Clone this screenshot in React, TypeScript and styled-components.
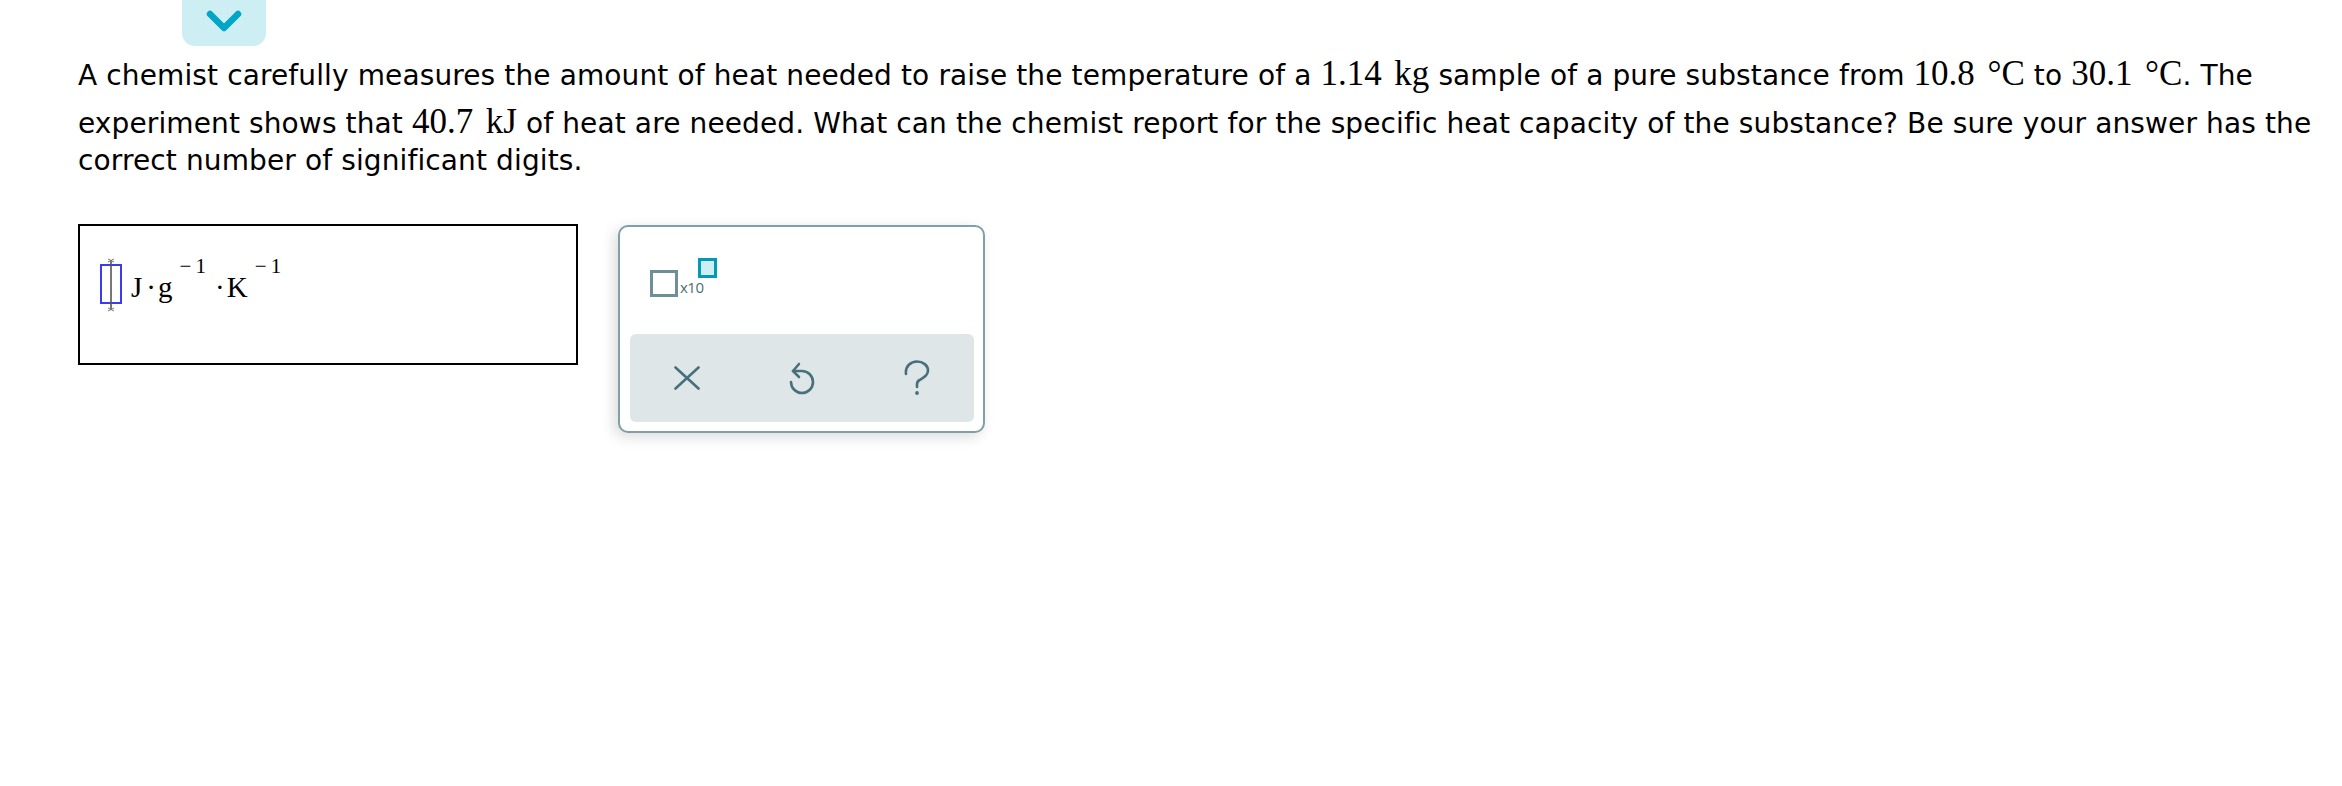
import React from 'react'
import styled, { createGlobalStyle } from 'styled-components'

const GlobalStyle = createGlobalStyle`
  html, body {
    margin: 0;
    padding: 0;
    background: #fff;
  }
  body {
    font-family: "DejaVu Sans", Verdana, sans-serif;
    color: #000;
  }
`

const Page = styled.div`
  width: 2342px;
  min-height: 786px;
`

const Tab = styled.div`
  width: 84px;
  height: 46px;
  margin-left: 182px;
  box-sizing: border-box;
  padding-top: 9px;
  display: flex;
  justify-content: center;
  align-items: flex-start;
  background: #cdeef3;
  border-radius: 0 0 13px 13px;
`

const Question = styled.p`
  margin: 0;
  padding: 0 18px 0 78px;
  font-size: 28px;
  line-height: 37px;
  letter-spacing: 0.12px;
`

const Math = styled.span`
  display: inline-block;
  padding-top: 10px;
  font-family: "Liberation Serif", "Times New Roman", serif;
  font-size: 35px;
  line-height: 1;
  letter-spacing: 0;
`

const Unit = styled.span`
  margin-left: 0.36em;
`

const AnswerRow = styled.div`
  display: flex;
  align-items: flex-start;
  gap: 40px;
  margin: 45px 0 0 78px;
`

const AnswerBox = styled.div`
  width: 500px;
  height: 141px;
  box-sizing: border-box;
  border: 2px solid #000;
  padding: 32px 0 0 20px;
  display: flex;
  align-items: flex-start;
`

const Units = styled.div`
  margin: -2px 0 0 7px;
  font-family: "Liberation Serif", "Times New Roman", serif;
  font-size: 29px;
  line-height: 1;
`

const Dot = styled.span<{ $wide?: boolean }>`
  margin: 0 2px 0 ${(p) => (p.$wide ? 9 : 4)}px;
`

const Sup = styled.span`
  margin-left: 7px;
  font-size: 21px;
  line-height: 1;
  vertical-align: 24px;
`

const Palette = styled.div`
  width: 367px;
  height: 208px;
  margin-top: 1px;
  box-sizing: border-box;
  border: 2px solid #809fa7;
  border-radius: 10px;
  background: #fff;
  box-shadow: -4px 4px 14px rgba(0, 0, 0, 0.14);
  display: flex;
  flex-direction: column;
`

const PaletteTop = styled.div`
  padding: 31px 0 0 30px;
  display: flex;
`

const SciButton = styled.div`
  display: flex;
  align-items: flex-start;
  cursor: pointer;
`

const BigSlot = styled.span`
  width: 28px;
  height: 27px;
  margin-top: 12px;
  box-sizing: border-box;
  border: 3px solid #6f8f98;
`

const ExpColumn = styled.span`
  display: flex;
  flex-direction: column;
  margin-left: 2px;
`

const SmallSlot = styled.span`
  width: 19px;
  height: 20px;
  margin-left: 18px;
  box-sizing: border-box;
  border: 3px solid #0599b8;
  background: #cdeef3;
`

const TenLabel = styled.span`
  margin-top: 1px;
  font-family: "Open Sans", "DejaVu Sans", sans-serif;
  font-size: 15px;
  line-height: 17px;
  letter-spacing: -0.5px;
  color: #4b6d77;
`

const ActionBar = styled.div`
  margin: auto 9px 9px 10px;
  height: 88px;
  display: grid;
  grid-template-columns: repeat(3, 1fr);
  align-items: center;
  justify-items: center;
  background: #dfe6e8;
  border-radius: 6px;
`

const ActionButton = styled.button`
  border: none;
  background: none;
  padding: 0;
  display: flex;
  cursor: pointer;
  color: #48707c;
`

const Chevron = () => (
  <svg width="38" height="24" viewBox="0 0 38 24">
    <path d="M5 5 L19 19 L33 5" fill="none" stroke="#00a6c6" strokeWidth="6.5" strokeLinecap="round" strokeLinejoin="round" />
  </svg>
)

const Cursor = () => (
  <svg width="24" height="54" viewBox="0 0 24 54">
    <rect x="1" y="7" width="20" height="38" fill="none" stroke="#3b3bf2" strokeWidth="2" />
    <line x1="11" y1="2" x2="11" y2="52" stroke="#555" strokeWidth="1.6" />
    <path d="M8 1 L14 4 M14 1 L8 4 M8 50 L14 53 M14 50 L8 53" stroke="#777" strokeWidth="1" />
  </svg>
)

const CloseIcon = () => (
  <svg width="26" height="24" viewBox="0 0 26 24">
    <path d="M1.5 1.5 L24.5 22.5 M24.5 1.5 L1.5 22.5" fill="none" stroke="currentColor" strokeWidth="2.6" strokeLinecap="round" />
  </svg>
)

const UndoIcon = () => (
  <svg width="28" height="34" viewBox="0 0 28 34">
    <path d="M5 10 H14 A11 11 0 1 1 3 21" fill="none" stroke="currentColor" strokeWidth="2.6" strokeLinecap="round" strokeLinejoin="round" />
    <path d="M11 3 L5 10 L11 16" fill="none" stroke="currentColor" strokeWidth="2.6" strokeLinecap="round" strokeLinejoin="round" />
  </svg>
)

const HelpIcon = () => (
  <svg width="26" height="36" viewBox="0 0 26 36">
    <path
      d="M2 14 C1 6 7 1.5 13 1.5 C19 1.5 24 5.5 24 10.5 C24 16 19 18 15.5 20 C13.8 21 13 22.5 13 24.5 V27"
      fill="none"
      stroke="currentColor"
      strokeWidth="2.6"
      strokeLinecap="round"
    />
    <circle cx="13" cy="33" r="1.9" fill="currentColor" />
  </svg>
)

export default function App() {
  return (
    <Page>
      <GlobalStyle />
      <Tab>
        <Chevron />
      </Tab>

      <Question>
        A chemist carefully measures the amount of heat needed to raise the temperature of a{' '}
        <Math>
          1.14<Unit>kg</Unit>
        </Math>{' '}
        sample of a pure substance from{' '}
        <Math>
          10.8<Unit>°C</Unit>
        </Math>{' '}
        to{' '}
        <Math>
          30.1<Unit>°C</Unit>
        </Math>
        . The experiment shows that{' '}
        <Math>
          40.7<Unit>kJ</Unit>
        </Math>{' '}
        of heat are needed. What can the chemist report for the specific heat capacity of the
        substance? Be sure your answer has the correct number of significant digits.
      </Question>

      <AnswerRow>
        <AnswerBox>
          <Cursor />
          <Units>
            J<Dot>·</Dot>g<Sup>−&thinsp;1</Sup>
            <Dot $wide>·</Dot>K<Sup>−&thinsp;1</Sup>
          </Units>
        </AnswerBox>

        <Palette>
          <PaletteTop>
            <SciButton>
              <BigSlot />
              <ExpColumn>
                <SmallSlot />
                <TenLabel>x10</TenLabel>
              </ExpColumn>
            </SciButton>
          </PaletteTop>
          <ActionBar>
            <ActionButton aria-label="Clear">
              <CloseIcon />
            </ActionButton>
            <ActionButton aria-label="Undo">
              <UndoIcon />
            </ActionButton>
            <ActionButton aria-label="Help">
              <HelpIcon />
            </ActionButton>
          </ActionBar>
        </Palette>
      </AnswerRow>
    </Page>
  )
}
